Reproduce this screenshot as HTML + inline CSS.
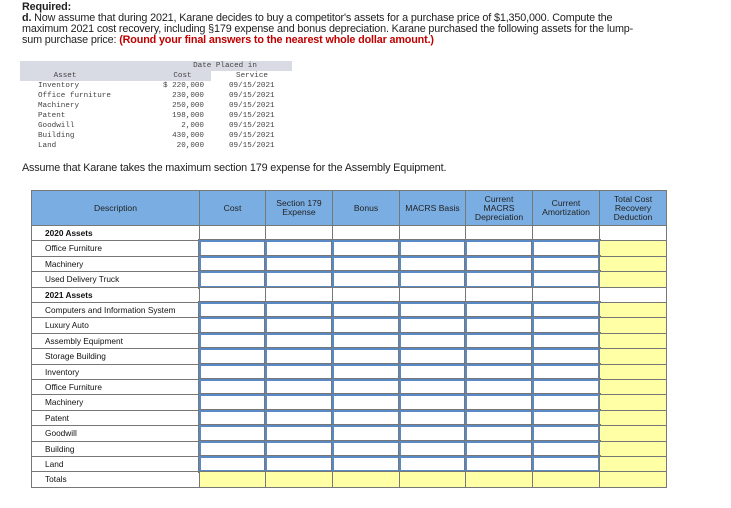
<!DOCTYPE html>
<html><head><style>
body{margin:0;width:731px;height:508px;background:#fff;position:relative;overflow:hidden;font-family:"Liberation Sans",Arial,sans-serif;}
.t{position:absolute;left:22px;font-size:10.8px;line-height:11px;color:#222;letter-spacing:-0.15px;white-space:nowrap}
.red{color:#c00000;font-weight:bold}
.mono{position:absolute;font-family:"Liberation Mono",monospace;font-size:7.6px;line-height:10px;color:#444;white-space:pre}
.c{position:absolute;box-sizing:border-box;font-size:8.3px;color:#111;}
</style></head><body>
<div class="t" style="top:2px;font-weight:bold">Required:</div>
<div class="t" style="top:13px"><b>d.</b> Now assume that during 2021, Karane decides to buy a competitor's assets for a purchase price of $1,350,000. Compute the<br>maximum 2021 cost recovery, including §179 expense and bonus depreciation. Karane purchased the following assets for the lump-<br>sum purchase price: <span class="red">(Round your final answers to the nearest whole dollar amount.)</span></div>
<div style="position:absolute;left:20px;top:61px;width:191px;height:20px;background:#d9dbe4"></div>
<div class="mono" style="left:158px;top:61px;width:134px;text-align:center;background:#d9dbe4">Date Placed in</div>
<div class="mono" style="left:20px;top:71px;width:90px;text-align:center">Asset</div>
<div class="mono" style="left:160px;top:71px;width:45px;text-align:center">Cost</div>
<div class="mono" style="left:212px;top:71px;width:80px;text-align:center">Service</div>
<div class="mono" style="left:38px;top:81px">Inventory
Office furniture
Machinery
Patent
Goodwill
Building
Land</div>
<div class="mono" style="left:140px;top:81px;width:64px;text-align:right">$ 220,000
230,000
250,000
198,000
2,000
430,000
20,000</div>
<div class="mono" style="left:229px;top:81px">09/15/2021
09/15/2021
09/15/2021
09/15/2021
09/15/2021
09/15/2021
09/15/2021</div>
<div class="t" style="top:163px">Assume that Karane takes the maximum section 179 expense for the Assembly Equipment.</div>
<div id="tb"></div>
<script>
(function(){
var xs=[31,199,265,332,399,465,532,599,666];
var hd=["Description","Cost","Section 179<br>Expense","Bonus","MACRS Basis","Current<br>MACRS<br>Depreciation","Current<br>Amortization","Total Cost<br>Recovery<br>Deduction"];
var rows=["2020 Assets","Office Furniture","Machinery","Used Delivery Truck","2021 Assets","Computers and Information System","Luxury Auto","Assembly Equipment","Storage Building","Inventory","Office Furniture","Machinery","Patent","Goodwill","Building","Land","Totals"];
var h='';var ty=190,hb=225,rh=15.4;
for(var i=0;i<8;i++){h+='<div class="c" style="left:'+xs[i]+'px;top:'+ty+'px;width:'+(xs[i+1]-xs[i]+1)+'px;height:'+(hb-ty+1)+'px;background:#7aaee3;border:1px solid #777;display:flex;align-items:center;justify-content:center;text-align:center;line-height:9px;font-size:8.6px;color:#222">'+hd[i]+'</div>';}
for(var r=0;r<17;r++){var y=Math.round(hb+r*rh),y2=Math.round(hb+(r+1)*rh);var hh=y2-y+1;
var bold=(r==0||r==4);
h+='<div class="c" style="left:31px;top:'+y+'px;width:169px;height:'+hh+'px;border:1px solid #777;padding-left:13px;line-height:'+(hh-2)+'px;'+(bold?'font-weight:bold':'')+'">'+rows[r]+'</div>';
for(var i=1;i<8;i++){var st;
if(bold)st='background:#fff;border:1px solid #777';
else if(r==16||i==7)st='background:#ffffa6;border:1px solid #777';
else st='background:#fff;border:2px solid #5a8ac6;outline:1px solid #777';
h+='<div class="c" style="left:'+xs[i]+'px;top:'+y+'px;width:'+(xs[i+1]-xs[i]+1)+'px;height:'+hh+'px;'+st+'"></div>';}}
document.getElementById('tb').innerHTML=h;
})();
</script>
</body></html>
